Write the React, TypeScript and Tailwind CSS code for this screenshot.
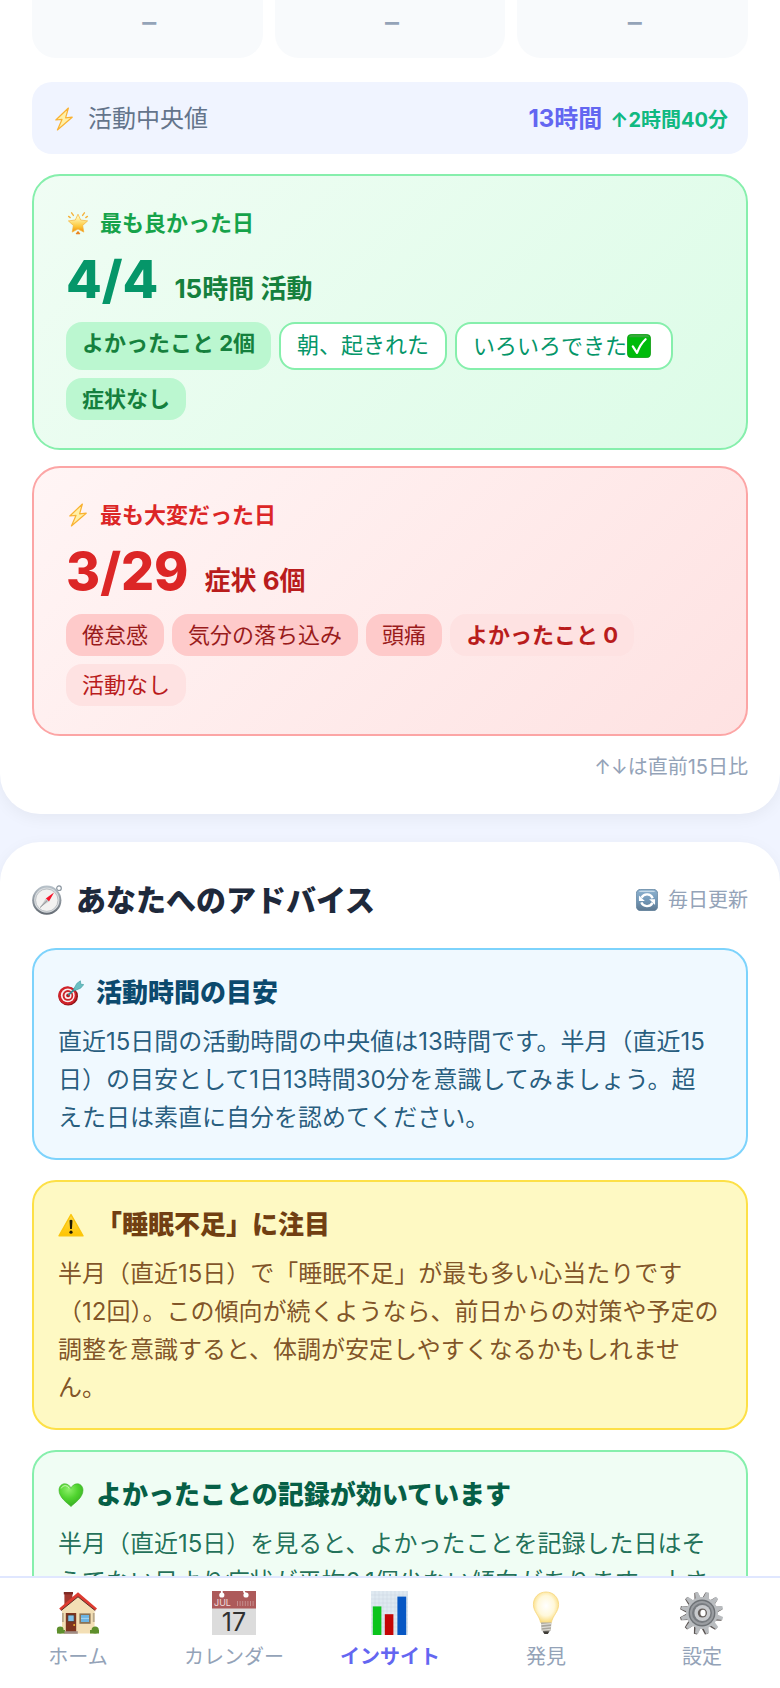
import * as React from "react";
import clsx from "clsx";

type IconProps = { className?: string };

const BoltIcon = ({ className }: IconProps) => (
  <svg viewBox="0 0 24 24" className={clsx("shrink-0", className)} aria-hidden="true">
    <path
      d="M16.4 1 3.8 13l6.200-.6L5.400 23 20.200 10.200l-6.600.6z"
      fill="#fff0a8"
      stroke="#f9b233"
      strokeWidth="1.2"
      strokeLinejoin="round"
    />
  </svg>
);

const StarIcon = ({ className }: IconProps) => (
  <svg viewBox="0 0 24 24" className={clsx("shrink-0", className)} aria-hidden="true">
    <defs>
      <linearGradient id="star-fill" x1="0" y1="0" x2="0" y2="1">
        <stop offset="0.2" stopColor="#fff6b0" />
        <stop offset="0.7" stopColor="#fdc536" />
        <stop offset="1" stopColor="#f08d0c" />
      </linearGradient>
    </defs>
    <path
      d="m12 3.2 2.7 5.8 6.900.9-5 4.6 1.2 6.6L12 18l-5.8 3.1 1.2-6.6-5-4.6 6.900-.9z"
      fill="url(#star-fill)"
      stroke="#f5b13a"
      strokeWidth="0.7"
      strokeLinejoin="round"
    />
    <g stroke="#f6b23c" strokeWidth="1.4" strokeLinecap="round">
      <path d="M7.400 4.400 5.600 1.800" />
      <path d="m16.600 4.400 1.800-2.600" />
      <path d="M4.200 6.600 2.600 5.400" />
      <path d="m19.800 6.600 1.600-1.200" />
    </g>
    <path d="m12 20.400 1.900 2.400h-3.800z" fill="#e8780b" stroke="#e8780b" strokeWidth="0.8" />
  </svg>
);

const CheckIcon = ({ className }: IconProps) => (
  <svg viewBox="0 0 24 24" className={clsx("shrink-0", className)} aria-hidden="true">
    <rect x="0.5" y="0.5" width="23" height="23" rx="3.6" fill="#00bb0b" />
    <path d="M1.5 3.2Q1.8 1 4 1h16q2.2 0 2.5 2.2z" fill="#35a83a" />
    <rect x="0.5" y="0.5" width="23" height="23" rx="3.6" fill="none" stroke="#0c9a12" strokeWidth="0.8" />
    <path
      d="m5.8 12.4 4.2 6.4Q13 10.5 18.6 5.2"
      fill="none"
      stroke="#fff"
      strokeWidth="2.2"
      strokeLinecap="round"
      strokeLinejoin="round"
    />
  </svg>
);

const CompassIcon = ({ className }: IconProps) => (
  <svg viewBox="0 0 30 30" className={clsx("shrink-0", className)} aria-hidden="true">
    <defs>
      <linearGradient id="compass-rim" x1="0" y1="0" x2="0" y2="1">
        <stop offset="0" stopColor="#b9c3cb" />
        <stop offset="1" stopColor="#636a72" />
      </linearGradient>
    </defs>
    <circle cx="27" cy="3.2" r="2.3" fill="none" stroke="#8b96a0" strokeWidth="1.2" />
    <circle cx="14.8" cy="15.2" r="14.6" fill="url(#compass-rim)" />
    <circle cx="14.8" cy="15.2" r="12.6" fill="#d8dcdf" />
    <circle cx="14.8" cy="15.2" r="11.2" fill="#f2f2f1" stroke="#a9afb4" strokeWidth="0.7" />
    <path d="M22 7.600 17 16.400 13.800 13.600z" fill="#f5132a" />
    <path d="M8 22.600 13.800 13.600 17 16.400z" fill="#c9cbcc" />
    <path d="m8 22.600 7.400-7.300" stroke="#777d82" strokeWidth="0.8" />
  </svg>
);

const RefreshIcon = ({ className }: IconProps) => (
  <svg viewBox="0 0 24 24" className={clsx("shrink-0", className)} aria-hidden="true">
    <defs>
      <linearGradient id="refresh-fill" x1="0" y1="0" x2="0" y2="1">
        <stop offset="0" stopColor="#8fb3d0" />
        <stop offset="0.5" stopColor="#7399b9" />
        <stop offset="1" stopColor="#5d7890" />
      </linearGradient>
    </defs>
    <rect x="0.4" y="0.4" width="23.2" height="23.2" rx="4.5" fill="url(#refresh-fill)" stroke="#5e7f9b" strokeWidth="0.8" />
    <path d="M3 3.2Q4 1.8 6 1.8h12q2 0 3 1.4z" fill="#c5d9e8" />
    <g fill="none" stroke="#fff" strokeWidth="2.6">
      <path d="M6 9.400a6.800 6.800 0 0 1 12.200.6" />
      <path d="M18 15.200a6.800 6.800 0 0 1-12.200-.6" />
    </g>
    <path d="M3.200 7v6.200h6.400z" fill="#fff" />
    <path d="M20.800 17.400v-6.200h-6.400z" fill="#fff" />
  </svg>
);

const TargetIcon = ({ className }: IconProps) => (
  <svg viewBox="0 0 26 26" className={clsx("shrink-0", className)} aria-hidden="true">
    <ellipse cx="10.2" cy="16.2" rx="9.8" ry="9.4" fill="#8f1418" />
    <ellipse cx="9.4" cy="15.4" rx="9.2" ry="9.2" fill="#d0232a" />
    <circle cx="9.8" cy="15.4" r="6.9" fill="#fbeeee" />
    <circle cx="9.9" cy="15.4" r="5.3" fill="#cc242b" />
    <circle cx="10" cy="15.4" r="3.5" fill="#fbeeee" />
    <circle cx="10.1" cy="15.4" r="1.9" fill="#b6161d" />
    <path d="m10.2 15.2 9-8.4" stroke="#2f8f94" strokeWidth="1.8" />
    <path d="m15.600 9.200 3.200-5.800L22.400.8l.4 3.400 3 .4-3.200 3.600-5.800 2.400z" fill="#69bfc2" stroke="#3a9a9e" strokeWidth="0.6" />
  </svg>
);

const WarningIcon = ({ className }: IconProps) => (
  <svg viewBox="0 0 26 26" className={clsx("shrink-0", className)} aria-hidden="true">
    <defs>
      <linearGradient id="warning-fill" x1="0" y1="0" x2="0" y2="1">
        <stop offset="0" stopColor="#fddb4e" />
        <stop offset="1" stopColor="#ffc400" />
      </linearGradient>
    </defs>
    <path d="M13 2.600 25 23.800H1z" fill="url(#warning-fill)" stroke="#fbc60d" strokeWidth="1.4" strokeLinejoin="round" />
    <path d="M11.500 8.400q1.500-1.200 3 0L13.900 17h-1.800z" fill="#1f1a06" />
    <circle cx="13" cy="20.2" r="1.6" fill="#1f1a06" />
  </svg>
);

const HeartIcon = ({ className }: IconProps) => (
  <svg viewBox="0 0 26 26" className={clsx("shrink-0", className)} aria-hidden="true">
    <defs>
      <radialGradient id="heart-fill" cx="0.4" cy="0.25" r="0.8">
        <stop offset="0" stopColor="#8df06a" />
        <stop offset="0.5" stopColor="#4fd32e" />
        <stop offset="1" stopColor="#35a822" />
      </radialGradient>
    </defs>
    <path
      d="M13 24.600C9 20.600 1 15.600 1 8.200 1 4.400 3.600 1.800 6.800 1.800c2.800 0 5.200 1.700 6.200 4.600 1-2.900 3.400-4.600 6.200-4.600C22.400 1.800 25 4.400 25 8.200c0 7.400-8 12.400-12 16.400z"
      fill="url(#heart-fill)"
      stroke="#3fb02a"
      strokeWidth="0.6"
    />
    <path d="M3.200 6.400Q4.400 3.600 7.200 3.600t4 3" fill="none" stroke="#c5f7ae" strokeWidth="1" />
  </svg>
);

const HomeIcon = ({ className }: IconProps) => (
  <svg viewBox="0 0 44 44" className={clsx("shrink-0", className)} aria-hidden="true">
    <path d="M8.400 1.600h8v12h-8z" fill="#a3382f" />
    <path d="M7.800 1h9.200v2.400H7.800z" fill="#7f2a24" />
    <path d="M22 3 38.600 18v24.400H6V18z" fill="#f3dfb5" />
    <path d="M6 22h1.800v9H6zM36.800 22h1.800v9h-1.800z" fill="#b9a98c" />
    <path d="m22 1.200 19 16.200-1.800 2.200L22 5.800 5 19.600l-1.800-2.200z" fill="#dd3b30" />
    <path d="M5 19.600 22 5.800l17.200 13.800" fill="none" stroke="#4a2320" strokeWidth="0.9" />
    <path d="M9.800 22h10.400v19.400H9.800z" fill="#7e3520" />
    <path d="M11.800 24h6.400v6.600h-6.400z" fill="#7fc1ea" stroke="#54301f" strokeWidth="0.8" />
    <circle cx="18.2" cy="34" r="1" fill="#f2b632" />
    <path d="M23.400 22.400h11.200v10.400H23.400z" fill="#8b7355" />
    <path d="M25 24h8v7h-8z" fill="#6db4e2" />
    <path d="M25 27.400h8" stroke="#b2ddf5" strokeWidth="0.8" />
    <g fill="#5e8f2c">
      <circle cx="4.2" cy="39" r="3.4" />
      <circle cx="39.2" cy="39" r="3.6" />
      <path d="M1 39h8v3.600H1zM34 39h9v3.600h-9z" />
    </g>
    <path d="M8.400 40.200h13.400v2.600H8.400z" fill="#a08c84" />
  </svg>
);

const CalendarIcon = ({ className }: IconProps) => (
  <svg viewBox="0 0 44 44" className={clsx("shrink-0", className)} aria-hidden="true">
    <path d="M0 17h44v27H0z" fill="#dcdcdc" />
    <path d="M0 0h44v17.400H0z" fill="#ad5a5a" />
    <path d="M9.800 0v4M31.600 0l2.400 4" stroke="#fff" strokeWidth="1.8" />
    <circle cx="9.8" cy="4" r="2.6" fill="#fff" />
    <circle cx="34" cy="4" r="2.6" fill="#fff" />
    <path d="M25 12.600h17" stroke="#c58d8d" strokeWidth="5" strokeDasharray="1 1.6" />
    <text x="2" y="15" fontSize="9" fill="#f0dcdc" fontFamily="Inter, sans-serif">JUL</text>
    <text x="22" y="39.5" fontSize="25" textAnchor="middle" fill="#303030" fontFamily="Inter, sans-serif">17</text>
  </svg>
);

const ChartIcon = ({ className }: IconProps) => (
  <svg viewBox="0 0 44 44" className={clsx("shrink-0", className)} aria-hidden="true">
    <path d="M3 0h37v44H3z" fill="#dfe9f1" />
    <path
      d="M3 4h37M3 8h37M3 12h37M3 16h37M3 20h37M3 24h37M3 28h37M3 32h37M3 36h37M3 40h37M7 0v44M11 0v44M15 0v44M19 0v44M23 0v44M27 0v44M31 0v44M35 0v44M39 0v44"
      stroke="#cbd7e1"
      strokeWidth="0.5"
    />
    <path d="M4.800 15.400h8.600V44H4.800z" fill="#0bc41c" />
    <path d="M16.800 23.200h8.600V44h-8.600z" fill="#c40505" />
    <path d="M29.400 5.600h8.800V44h-8.800z" fill="#0757c4" />
  </svg>
);

const BulbIcon = ({ className }: IconProps) => (
  <svg viewBox="0 0 44 44" className={clsx("shrink-0", className)} aria-hidden="true">
    <defs>
      <radialGradient id="bulb-fill" cx="0.5" cy="0.45" r="0.55">
        <stop offset="0" stopColor="#ffffff" />
        <stop offset="0.6" stopColor="#fff8da" />
        <stop offset="1" stopColor="#fbdc7c" />
      </radialGradient>
    </defs>
    <path
      d="M22 1c7.200 0 12.600 5.400 12.600 12.400 0 7.600-6 11-7.200 18.200H16.600C15.400 24.400 9.400 21 9.400 13.400 9.400 6.400 14.800 1 22 1z"
      fill="url(#bulb-fill)"
      stroke="#f6d67c"
      strokeWidth="0.8"
    />
    <path d="M17 31.400h10.400l-.6 8.200q-4.600 2.200-9.200 0z" fill="#a9a59c" />
    <path d="m17 33.600 10.200-1M17.200 36.600l9.800-1M17.600 39.200l9.200-1" stroke="#dedcd6" strokeWidth="1.1" />
    <path d="M18.600 40.200h7L23.800 43h-3.400z" fill="#3e3b36" />
  </svg>
);

const gearAngles = [0, 30, 60, 90, 120, 150, 180, 210, 240, 270, 300, 330];

const GearIcon = ({ className }: IconProps) => (
  <svg viewBox="0 0 44 44" className={clsx("shrink-0", className)} aria-hidden="true">
    <g fill="#5b5452">
      {gearAngles.map((a) => (
        <path key={a} d="m18.400 8 1.800-7h3.200l1.600 7z" transform={`rotate(${a + 14} 21.2 22.4)`} />
      ))}
    </g>
    <g fill="#b9bcbf">
      {gearAngles.map((a) => (
        <path key={a} d="m19.200 8 1.300-7.400h3L24.800 8z" transform={`rotate(${a + 15} 22 22)`} />
      ))}
    </g>
    <circle cx="22" cy="22" r="16" fill="#b9bcbf" />
    <circle cx="22" cy="22" r="13.4" fill="#6e7276" />
    <circle cx="22" cy="22" r="12" fill="#9a9da1" />
    <circle cx="22" cy="22" r="10" fill="#787c80" />
    <circle cx="22.4" cy="22" r="8" fill="#c8cacd" />
    <circle cx="22.4" cy="22" r="4.6" fill="#66605d" />
    <ellipse cx="23" cy="22" rx="2.6" ry="3.2" fill="#fff" />
  </svg>
);

const tagStyles = {
  good: "bg-[#bbf7d0] font-bold text-[#15803d]",
  outline: "border-2 border-[#86efac] bg-white text-[#059669]",
  symptom: "bg-[#fecaca] text-[#991b1b]",
  softBold: "bg-[#fee2e2] font-bold text-[#b91c1c]",
  soft: "bg-[#fee2e2] text-[#b91c1c]",
};

type TagItem = { kind: keyof typeof tagStyles; label: string; check?: boolean };

const Tag = ({ kind, label, check }: TagItem) => (
  <li className={clsx("flex rounded-2xl px-4 py-1 text-[22px]", check ? "items-center leading-9" : "leading-[34px]", tagStyles[kind])}>
    {label}
    {check && <CheckIcon className="mr-1 size-6" />}
  </li>
);

const dayTones = {
  best: {
    card: "border-[#86efac] from-[#f0fdf4] to-[#dcfce7]",
    title: "text-[#16a34a]",
    date: "text-[#059669]",
    note: "text-[#15803d]",
  },
  hard: {
    card: "border-[#fca5a5] from-[#fff5f5] to-[#fee2e2]",
    title: "text-[#dc2626]",
    date: "text-[#dc2626]",
    note: "text-[#b91c1c]",
  },
};

type DayCardProps = {
  tone: keyof typeof dayTones;
  icon: React.ReactNode;
  title: string;
  date: string;
  note: string;
  tags: TagItem[];
};

const DayCard = ({ tone, icon, title, date, note, tags }: DayCardProps) => {
  const t = dayTones[tone];
  return (
    <article className={clsx("rounded-[28px] border-2 bg-linear-135 px-8 py-7", t.card)}>
      <h3 className={clsx("flex items-center gap-2.5 text-[22px] leading-[38px] font-bold", t.title)}>
        {icon}
        {title}
      </h3>
      <p className="mt-1.5 flex items-baseline gap-4">
        <span className={clsx("text-[52px] leading-[64px] font-extrabold", t.date)}>{date}</span>
        <span className={clsx("text-[26px] font-bold", t.note)}>{note}</span>
      </p>
      <ul className="mt-2.5 flex flex-wrap gap-2">
        {tags.map((tag) => (
          <Tag key={tag.label} {...tag} />
        ))}
      </ul>
    </article>
  );
};

const adviceTones = {
  sky: { card: "border-[#7dd3fc] bg-[#f0f9ff]", title: "text-[#0c4a6e]", body: "text-[#0c4a6e]/90" },
  yellow: { card: "border-[#fde047] bg-[#fef9c3]", title: "text-[#713f12]", body: "text-[#713f12]/90" },
  green: { card: "border-[#86efac] bg-[#f0fdf4]", title: "text-[#065f46]", body: "text-[#065f46]/90" },
};

type AdviceCardProps = {
  tone: keyof typeof adviceTones;
  icon: React.ReactNode;
  title: string;
  children: React.ReactNode;
};

const AdviceCard = ({ tone, icon, title, children }: AdviceCardProps) => {
  const t = adviceTones[tone];
  return (
    <article className={clsx("rounded-3xl border-2 px-6 pt-[23px] pb-[21px]", t.card)}>
      <h3 className={clsx("flex items-center gap-3 text-[26px] leading-10 font-extrabold", t.title)}>
        {icon}
        {title}
      </h3>
      <p className={clsx("mt-2.5 text-2xl leading-[38px]", t.body)}>{children}</p>
    </article>
  );
};

const navItems = [
  { label: "ホーム", Icon: HomeIcon },
  { label: "カレンダー", Icon: CalendarIcon },
  { label: "インサイト", Icon: ChartIcon, active: true },
  { label: "発見", Icon: BulbIcon },
  { label: "設定", Icon: GearIcon },
];

const BottomNav = () => (
  <nav className="grid h-28 shrink-0 grid-cols-5 border-t-2 border-[#e0e7ff] bg-white">
    {navItems.map(({ label, Icon, active }) => (
      <a
        key={label}
        href="#"
        aria-current={active ? "page" : undefined}
        className={clsx(
          "flex flex-col items-center gap-2 pt-[13px] text-xl leading-7",
          active ? "font-bold text-[#6366f1]" : "text-[#94a3b8]"
        )}
      >
        <Icon className="size-11" />
        {label}
      </a>
    ))}
  </nav>
);

export default function App() {
  return (
    <div
      lang="ja"
      className="flex h-screen flex-col bg-[#f0f4ff] font-['Inter','Noto_Sans_CJK_JP',sans-serif]"
    >
      <main className="flex min-h-0 flex-1 flex-col gap-7 overflow-y-auto [scrollbar-width:none]">
        <section className="shrink-0 rounded-b-[40px] bg-white px-8 pb-8 shadow-[0_4px_16px_rgba(0,0,0,0.05)]">
          <div className="grid grid-cols-3 gap-3 text-center text-[28px] leading-[44px] font-medium text-[#94a3b8]">
            {[0, 1, 2].map((i) => (
              <div key={i} className="rounded-b-3xl bg-[#f8fafc] pb-3.5 pl-1">–</div>
            ))}
          </div>

          <div className="mt-6 flex items-center justify-between rounded-[20px] bg-[#f0f4ff] px-5 pt-[17px] pb-[15px]">
            <div className="flex items-center gap-3 text-2xl leading-10 text-[#64748b]">
              <BoltIcon className="size-6" />
              活動中央値
            </div>
            <div className="flex items-baseline gap-2">
              <span className="text-2xl leading-10 font-bold text-[#6366f1]">13時間</span>
              <span className="text-xl font-bold text-[#10b981]">↑2時間40分</span>
            </div>
          </div>

          <div className="mt-5 flex flex-col gap-4">
            <DayCard
              tone="best"
              icon={<StarIcon className="size-6" />}
              title="最も良かった日"
              date="4/4"
              note="15時間 活動"
              tags={[
                { kind: "good", label: "よかったこと 2個" },
                { kind: "outline", label: "朝、起きれた" },
                { kind: "outline", label: "いろいろできた", check: true },
                { kind: "good", label: "症状なし" },
              ]}
            />
            <DayCard
              tone="hard"
              icon={<BoltIcon className="size-6" />}
              title="最も大変だった日"
              date="3/29"
              note="症状 6個"
              tags={[
                { kind: "symptom", label: "倦怠感" },
                { kind: "symptom", label: "気分の落ち込み" },
                { kind: "symptom", label: "頭痛" },
                { kind: "softBold", label: "よかったこと 0" },
                { kind: "soft", label: "活動なし" },
              ]}
            />
          </div>

          <p className="mt-4 text-right text-xl leading-[30px] text-[#94a3b8]">↑↓は直前15日比</p>
        </section>

        <section className="shrink-0 rounded-[40px] bg-white px-8 pt-8 pb-8 shadow-[0_4px_16px_rgba(0,0,0,0.05)]">
          <header className="flex items-center justify-between">
            <h2 className="flex items-center gap-3.5 text-[30px] leading-[52px] font-extrabold text-[#1e293b]">
              <CompassIcon className="size-[30px]" />
              あなたへのアドバイス
            </h2>
            <p className="flex items-center gap-2.5 text-xl text-[#94a3b8]">
              <RefreshIcon className="size-[22px]" />
              毎日更新
            </p>
          </header>

          <div className="mt-[22px] flex flex-col gap-5">
            <AdviceCard tone="sky" icon={<TargetIcon className="size-[26px]" />} title="活動時間の目安">
              直近15日間の活動時間の中央値は13時間です。半月（直近15日）の目安として1日13時間30分を意識してみましょう。超
              <br />
              えた日は素直に自分を認めてください。
            </AdviceCard>
            <AdviceCard tone="yellow" icon={<WarningIcon className="size-[26px]" />} title="「睡眠不足」に注目">
              半月（直近15日）で「睡眠不足」が最も多い心当たりです（12回）。この傾向が続くようなら、前日からの対策や予定の調整を意識すると、体調が安定しやすくなるかもしれません。
            </AdviceCard>
            <AdviceCard tone="green" icon={<HeartIcon className="size-[26px]" />} title="よかったことの記録が効いています">
              半月（直近15日）を見ると、よかったことを記録した日はそうでない日より症状が平均0.1個少ない傾向があります。小さなことでも書き残してみましょう。
            </AdviceCard>
          </div>
        </section>
      </main>
      <BottomNav />
    </div>
  );
}
